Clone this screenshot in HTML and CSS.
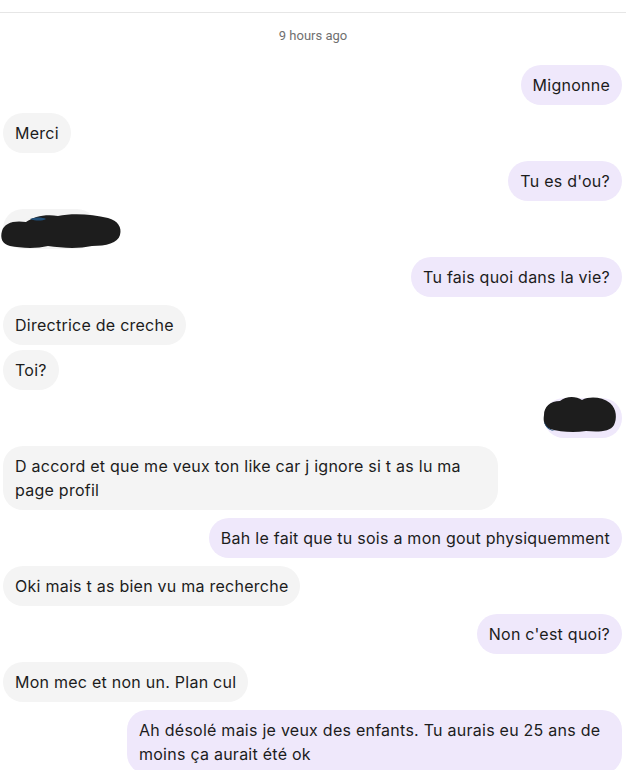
FILE: index.html
```html
<!DOCTYPE html>
<html lang="fr">
<head>
  <meta charset="UTF-8" />
  <meta name="viewport" content="width=device-width, initial-scale=1" />
  <title>Messages</title>
  <link rel="stylesheet" href="styles.css">
</head>
<body>

<div class="top-line"></div>
<div class="stamp">9 hours ago</div>

<div class="thread">
  <div class="msg sent"><div class="bubble">Mignonne</div></div>
  <div class="msg recv"><div class="bubble">Merci</div></div>
  <div class="msg sent"><div class="bubble">Tu es d'ou?</div></div>

  <!-- masked reply -->
  <div class="msg recv">
    <div class="bubble masked masked-left">
      <svg class="blot" width="122" height="40" viewBox="0 0 122 40">
        <path d="M2 20 C4 12 14 9 26 11 C34 6 44 3 58 5 C72 2 92 3 108 7 C118 10 122 16 120 24 C118 32 106 35 92 35 C78 38 62 37 48 35 C36 38 20 37 10 35 C2 33 0 27 2 20 Z" fill="#1d1d1d"/>
        <path d="M30 8 C36 6 42 6 46 8 C42 10 36 10 30 8 Z" fill="#1f4e78"/>
      </svg>
    </div>
  </div>

  <div class="msg sent"><div class="bubble">Tu fais quoi dans la vie?</div></div>
  <div class="msg recv"><div class="bubble">Directrice de creche</div></div>
  <div class="msg recv grouped"><div class="bubble">Toi?</div></div>

  <!-- masked message -->
  <div class="msg sent">
    <div class="bubble masked masked-right">
      <svg class="blot" width="78" height="40" viewBox="0 0 78 40">
        <path d="M4 20 C4 12 10 6 20 6 C26 1 36 1 42 5 C50 1 62 2 70 8 C77 14 77 24 74 30 C70 37 58 37 46 36 C34 38 20 37 10 34 C4 31 3 26 4 20 Z" fill="#1d1d1d"/>
        <path d="M4 26 C6 32 10 35 16 36 C10 36 5 33 4 26 Z" fill="#1f4e78"/>
      </svg>
    </div>
  </div>

  <div class="msg recv"><div class="bubble">D accord et que me veux ton like car j ignore si t as lu ma page profil</div></div>
  <div class="msg sent"><div class="bubble">Bah le fait que tu sois a mon gout physiquemment</div></div>
  <div class="msg recv"><div class="bubble">Oki mais t as bien vu ma recherche</div></div>
  <div class="msg sent"><div class="bubble">Non c'est quoi?</div></div>
  <div class="msg recv"><div class="bubble">Mon mec et non un. Plan cul</div></div>
  <div class="msg sent"><div class="bubble">Ah désolé mais je veux des enfants. Tu aurais eu 25 ans de moins ça aurait été ok</div></div>
</div>

</body>
</html>
```

FILE: styles.css
```css
body {
  margin: 0;
  font-family: 'Inter', 'Roboto', sans-serif;
  background-color: #ffffff;
  color: #1c1c1c;
}
.top-line {
  height: 12px;
  border-bottom: 1px solid #e6e6e6;
}
.stamp {
  margin-top: 15px;
  text-align: center;
  font-family: 'Roboto', sans-serif;
  font-size: 13px;
  line-height: 16px;
  color: #707070;
}
.thread {
  display: flex;
  flex-direction: column;
  gap: 8px;
  margin-top: 21px;
  padding: 0 4px 0 3px;
}
.msg {
  display: flex;
}
.msg.sent {
  justify-content: flex-end;
}
.msg.recv {
  justify-content: flex-start;
}
.msg.grouped {
  margin-top: -3px;
}
.bubble {
  max-width: 471px;
  padding: 8px 12px;
  font-size: 16px;
  line-height: 24px;
  letter-spacing: 0.25px;
  border-radius: 20px;
}
.recv .bubble {
  background: #f4f4f4;
}
.sent .bubble {
  background: #efe8fb;
}
.bubble.masked {
  position: relative;
  height: 24px;
}
.masked-left {
  width: 70px;
}
.masked-right {
  width: 54px;
}
.blot {
  position: absolute;
  display: block;
}
.masked-left .blot {
  left: -3px;
  top: 2px;
}
.masked-right .blot {
  left: -4px;
  top: -3px;
}
```
